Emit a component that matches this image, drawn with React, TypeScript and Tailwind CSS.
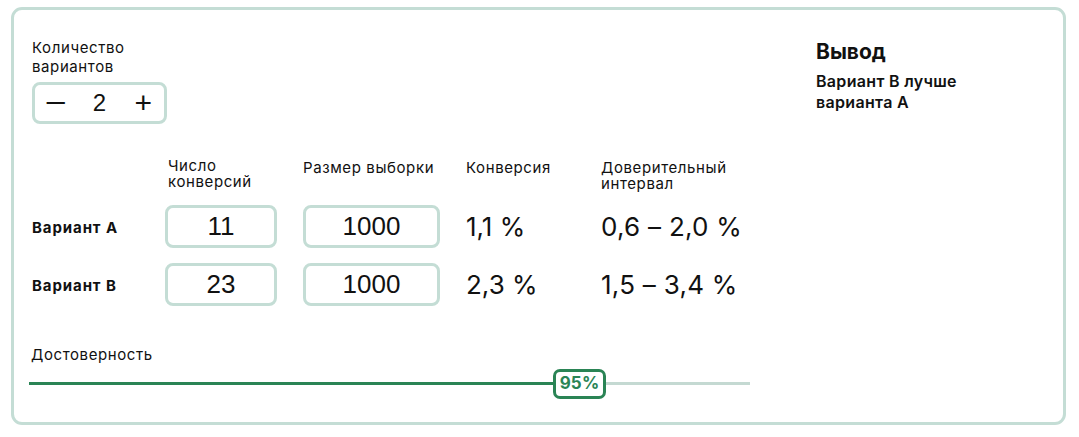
import { useState } from "react";

type Variant = { name: string; conversions: number; sample: number; rate: string; interval: string };

const variants: Variant[] = [
  { name: "Вариант A", conversions: 11, sample: 1000, rate: "1,1 %", interval: "0,6 – 2,0 %" },
  { name: "Вариант B", conversions: 23, sample: 1000, rate: "2,3 %", interval: "1,5 – 3,4 %" },
];

const font = { fontFamily: "Inter, 'Noto Sans', sans-serif" };

function NumberBox({ value, wide }: { value: number; wide?: boolean }) {
  return (
    <div
      className={`${wide ? "w-[137px]" : "w-[112px]"} h-[43px] rounded-[8px] border-[3px] border-[#c4ddd5] flex items-center justify-center text-[26px] text-[#111] font-['Liberation_Sans',sans-serif]`}
    >
      {value}
    </div>
  );
}

export default function App() {
  const [count, setCount] = useState(2);
  const confidence = 95;

  return (
    <div className="w-[1079px] h-[437px] bg-white pt-[7px] pl-[11px]" style={font}>
      <div className="w-[1055px] h-[418px] rounded-[11px] border-[3px] border-[#c4ddd5] flex pl-[18px] pt-[28px]">
        <div className="w-[770px] flex flex-col">
          <div className="text-[15px] tracking-[0.04em] leading-[19px] text-[#111] w-[120px]">Количество вариантов</div>
          <div className="mt-[6px] w-[135px] h-[42px] rounded-[8px] border-[3px] border-[#c4ddd5] flex items-center justify-between px-[12px] text-[#111] font-['Liberation_Sans',sans-serif]">
            <button onClick={() => setCount(Math.max(1, count - 1))} className="text-[30px] leading-none font-light scale-x-125">−</button>
            <span className="text-[24px]">{count}</span>
            <button onClick={() => setCount(count + 1)} className="text-[30px] leading-none font-light">+</button>
          </div>

          <div className="mt-[34px] grid grid-cols-[133px_138px_163px_135px_160px] text-[#111]">
            <div />
            <div className="text-[15px] tracking-[0.04em] leading-[16px] pl-[3px] w-[110px]">Число конверсий</div>
            <div className="text-[15px] tracking-[0.04em] leading-[16px] pt-[2px] whitespace-nowrap">Размер выборки</div>
            <div className="text-[15px] tracking-[0.04em] leading-[16px] pt-[2px]">Конверсия</div>
            <div className="text-[15px] tracking-[0.04em] leading-[16px] pt-[2px] w-[140px]">Доверительный интервал</div>

            {variants.map((v, i) => (
              <div key={v.name} className="contents">
                <div className={`${i === 0 ? "mt-[13px]" : "mt-[15px]"} h-[43px] pt-[3px] flex items-center text-[15px] tracking-[0.06em] font-bold`}>{v.name}</div>
                <div className={`${i === 0 ? "mt-[13px]" : "mt-[15px]"}`}>
                  <NumberBox value={v.conversions} />
                </div>
                <div className={`${i === 0 ? "mt-[13px]" : "mt-[15px]"}`}>
                  <NumberBox value={v.sample} wide />
                </div>
                <div className={`${i === 0 ? "mt-[13px]" : "mt-[15px]"} h-[43px] flex items-center text-[26px]`}>{v.rate}</div>
                <div className={`${i === 0 ? "mt-[13px]" : "mt-[15px]"} h-[43px] flex items-center text-[26px] tracking-[0.01em] whitespace-nowrap`}>{v.interval}</div>
              </div>
            ))}
          </div>

          <div className="mt-[39px] -ml-[1px] text-[15px] tracking-[0.04em] leading-[19px] text-[#111]">Достоверность</div>
          <div className="relative mt-[18px] -ml-[3px] w-[721px] h-[3px] bg-[#c4d9d2]">
            <div className="h-full w-[526px] bg-[#2a8455]" />
            <div className="absolute left-[524px] top-1/2 -translate-y-1/2 w-[53px] h-[30px] rounded-[7px] border-[3px] border-[#2a8455] bg-white flex items-center justify-center text-[17px] font-bold tracking-[0.01em] text-[#2a8455]">
              {confidence}%
            </div>
          </div>
        </div>

        <div className="ml-[14px] pt-[1px]">
          <div className="text-[21px] font-bold text-[#111] leading-[26px]">Вывод</div>
          <div className="mt-[6px] text-[16px] font-semibold tracking-[0.02em] leading-[21px] text-[#111] w-[175px]">Вариант B лучше варианта A</div>
        </div>
      </div>
    </div>
  );
}
